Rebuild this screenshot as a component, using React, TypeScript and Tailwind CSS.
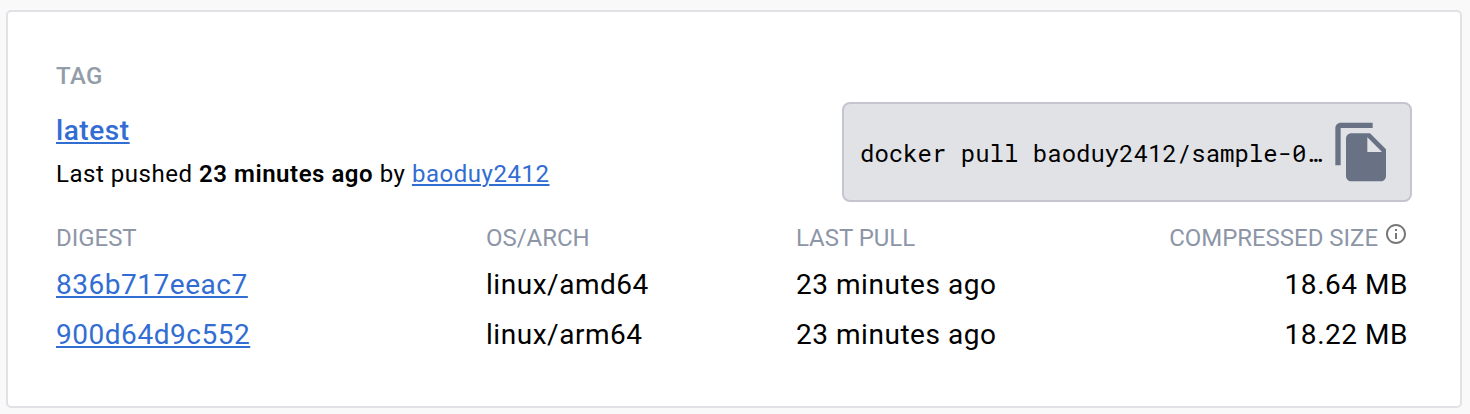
import React from "react";

const link = "text-[#326dd3] underline underline-offset-[2px] decoration-[2px]";

const rows = [
  { digest: "836b717eeac7", arch: "linux/amd64", pull: "23 minutes ago", size: "18.64 MB" },
  { digest: "900d64d9c552", arch: "linux/arm64", pull: "23 minutes ago", size: "18.22 MB" },
];

export default function App() {
  return (
    <div className="h-[414px] overflow-hidden bg-[#f9f9fa] pt-[10px] pl-[6px] font-['Roboto',sans-serif] text-black antialiased">
      <main className="h-[398px] w-[1456px] rounded-[5px] border-2 border-[#e1e1e6] bg-white pt-[50px] pr-[48px] pl-[48px]">
        <div className="flex h-[140px] justify-between">
          <div>
            <div className="h-[28px] text-[24px] leading-[28px] font-medium tracking-[0.4px] text-[#929da7]">TAG</div>
            <div className="mt-[24px] h-[34px] text-[28px] leading-[34px] font-medium tracking-[0.56px]">
              <a href="#" className={link}>latest</a>
            </div>
            <p className="mt-[12px] text-[24px] leading-[28px] tracking-[0.53px] whitespace-nowrap">
              Last pushed <b className="font-semibold">23 minutes ago</b> by <a href="#" className={link}>baoduy2412</a>
            </p>
          </div>
          <div className="mt-[40px] flex h-[100px] w-[570px] items-center rounded-[8px] border-2 border-[#c4c5d1] bg-[#e1e2e6] pl-[16px]">
            <code className="w-[463px] pt-[2px] font-['Roboto_Mono','DejaVu_Sans_Mono',monospace] text-[24px] whitespace-nowrap">docker pull baoduy2412/sample-0…</code>
            <svg className="ml-[7px] size-[64px]" viewBox="0 0 24 24" fill="#697284">
              <path d="M16 1H4c-1.1 0-2 .9-2 2v14h2V3h12V1zm-1 4 6 6v10c0 1.100-.9 2-2 2H7.990C6.890 23 6 22.100 6 21l.01-14c0-1.100.890-2 1.990-2h7zm-1 7h5.500L14 6.500V12z" />
            </svg>
          </div>
        </div>
        <div className="mt-[22px] mb-[8px] grid h-[28px] grid-cols-[430px_310px_1fr_auto] pr-[4px] text-[24px] leading-[28px] tracking-[-0.03px] text-[#8d96a7]">
          <span>DIGEST</span>
          <span>OS/ARCH</span>
          <span>LAST PULL</span>
          <span className="flex gap-[6px]">
            COMPRESSED SIZE
            <svg className="-mt-[2px] size-[24px]" viewBox="0 0 24 24" fill="#777777">
              <path d="M11 7h2v2h-2zm0 4h2v6h-2zm1-9C6.480 2 2 6.480 2 12s4.480 10 10 10 10-4.480 10-10S17.520 2 12 2zm0 18c-4.410 0-8-3.590-8-8s3.590-8 8-8 8 3.590 8 8-3.590 8-8 8z" />
            </svg>
          </span>
        </div>
        {rows.map((r) => (
          <div key={r.digest} className="grid h-[50px] grid-cols-[430px_310px_1fr_auto] items-center pr-[4px] text-[28px] tracking-[0.53px]">
            <span><a href="#" className={link}>{r.digest}</a></span>
            <span>{r.arch}</span>
            <span>{r.pull}</span>
            <span>{r.size}</span>
          </div>
        ))}
      </main>
    </div>
  );
}
